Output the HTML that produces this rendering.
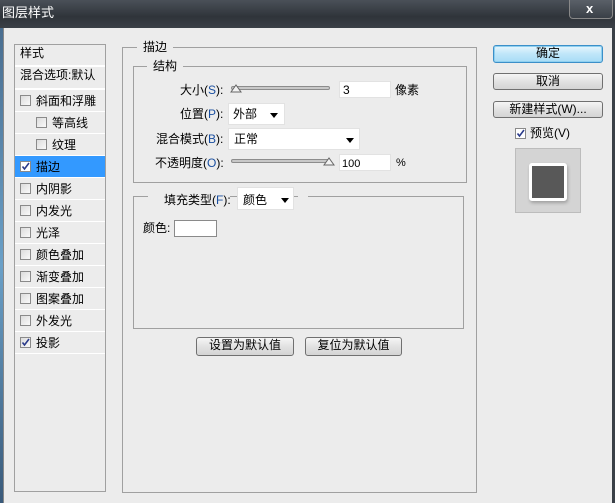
<!DOCTYPE html>
<html><head><meta charset="utf-8"><style>
*{margin:0;padding:0;box-sizing:border-box}
body{width:615px;height:503px;overflow:hidden;background:#ececec;font-family:"Liberation Sans","Noto Sans CJK SC",sans-serif;font-size:12px;color:#000;position:relative}
.a{position:absolute}
.t{position:absolute;white-space:nowrap;line-height:14px}
.title{left:0;top:0;width:615px;height:28px;background:linear-gradient(#4a5058,#2f343a 60%,#3a4047);}
.box{position:absolute;border:1px solid #a0a0a0}
.leg{position:absolute;background:#ececec;padding:0 6px;line-height:14px}
.inp{position:absolute;background:#fff;border:1px solid #e2e2e2}
.btn{position:absolute;border:1px solid #707070;border-radius:3px;background:linear-gradient(#f5f5f5,#e2e2e2 50%,#d4d4d4);text-align:center;line-height:15px}
.cb{position:absolute;width:11px;height:11px;border:1px solid #8a8a8a;background:linear-gradient(135deg,#dcdcdc,#fafafa)}
.cb svg{position:absolute;left:0;top:0}
.row{position:absolute;left:15px;width:90px;height:22px;border-bottom:1px solid #fff}
.row span{position:absolute;top:4px;line-height:14px}
.u{color:#1a4fa0}
.arr{position:absolute;width:0;height:0;border-left:4px solid transparent;border-right:4px solid transparent;border-top:5px solid #000}
.slider{position:absolute;height:4px;border:1px solid #8c8c8c;border-radius:2px;background:#c8c8c8}
</style></head><body>
<div class="a title"></div>
<div class="t" style="left:2px;top:6px;color:#fff;font-size:13px">图层样式</div>
<div class="a" style="left:569px;top:0;width:44px;height:19px;border:1px solid #888;border-top:none;border-radius:0 0 4px 4px;background:linear-gradient(#5a6068,#3a4047)"></div>
<div class="t" style="left:586px;top:2px;color:#fff;font-weight:bold;font-size:13px">x</div>
<div class="a" style="left:0;top:28px;width:3px;height:475px;background:linear-gradient(#4a6e90,#6aa0c8,#3a5a7a)"></div>
<div class="a" style="left:3px;top:28px;width:1px;height:475px;background:#888"></div>
<div class="a" style="left:612px;top:28px;width:3px;height:475px;background:#3a4047"></div>

<div class="box" style="left:14px;top:44px;width:92px;height:448px;background:#ececec"></div>
<div class="row" style="top:45px;height:22px;border-bottom:2px solid #fff"><span style="left:5px;top:1px">样式</span></div>
<div class="row" style="top:67px;height:23px;border-bottom:2px solid #fff"><span style="left:5px;top:1px">混合选项:默认</span></div>
<div class="row" style="top:90px"><div class="cb" style="left:5px;top:5px"></div><span style="left:21px">斜面和浮雕</span></div>
<div class="row" style="top:112px"><div class="cb" style="left:21px;top:5px"></div><span style="left:37px">等高线</span></div>
<div class="row" style="top:134px"><div class="cb" style="left:21px;top:5px"></div><span style="left:37px">纹理</span></div>
<div class="row" style="top:156px;background:#3399ff"><div class="cb" style="left:5px;top:5px;background:#fff"><svg width="9" height="9"><path d="M1.5 4.5 L3.5 7 L8 1" stroke="#2a3a8a" stroke-width="1.6" fill="none"/></svg></div><span style="left:21px">描边</span></div>
<div class="row" style="top:178px"><div class="cb" style="left:5px;top:5px"></div><span style="left:21px">内阴影</span></div>
<div class="row" style="top:200px"><div class="cb" style="left:5px;top:5px"></div><span style="left:21px">内发光</span></div>
<div class="row" style="top:222px"><div class="cb" style="left:5px;top:5px"></div><span style="left:21px">光泽</span></div>
<div class="row" style="top:244px"><div class="cb" style="left:5px;top:5px"></div><span style="left:21px">颜色叠加</span></div>
<div class="row" style="top:266px"><div class="cb" style="left:5px;top:5px"></div><span style="left:21px">渐变叠加</span></div>
<div class="row" style="top:288px"><div class="cb" style="left:5px;top:5px"></div><span style="left:21px">图案叠加</span></div>
<div class="row" style="top:310px"><div class="cb" style="left:5px;top:5px"></div><span style="left:21px">外发光</span></div>
<div class="row" style="top:332px"><div class="cb" style="left:5px;top:5px"><svg width="9" height="9"><path d="M1.5 4.5 L3.5 7 L8 1" stroke="#2a3a8a" stroke-width="1.6" fill="none"/></svg></div><span style="left:21px">投影</span></div>

<div class="box" style="left:122px;top:47px;width:355px;height:446px"></div>
<div class="leg" style="left:137px;top:40px">描边</div>
<div class="box" style="left:133px;top:66px;width:334px;height:117px"></div>
<div class="leg" style="left:147px;top:59px">结构</div>

<div class="t" style="left:180px;top:83px">大小(<span class="u">S</span>):</div>
<div class="slider" style="left:231px;top:86px;width:99px"></div>
<svg class="a" style="left:230px;top:83px" width="12" height="10"><polygon points="1,9 6,2 11,9" fill="#f2f2f2" stroke="#666"/></svg>
<div class="inp" style="left:339px;top:81px;width:52px;height:17px"></div>
<div class="t" style="left:343px;top:83px">3</div>
<div class="t" style="left:395px;top:83px">像素</div>

<div class="t" style="left:180px;top:107px">位置(<span class="u">P</span>):</div>
<div class="inp" style="left:228px;top:103px;width:57px;height:22px"></div>
<div class="t" style="left:233px;top:107px">外部</div>
<div class="arr" style="left:270px;top:113px"></div>

<div class="t" style="left:156px;top:132px">混合模式(<span class="u">B</span>):</div>
<div class="inp" style="left:228px;top:128px;width:132px;height:22px"></div>
<div class="t" style="left:234px;top:132px">正常</div>
<div class="arr" style="left:346px;top:138px"></div>

<div class="t" style="left:155px;top:156px">不透明度(<span class="u">O</span>):</div>
<div class="slider" style="left:231px;top:159px;width:99px"></div>
<svg class="a" style="left:323px;top:156px" width="12" height="10"><polygon points="1,9 6,2 11,9" fill="#f2f2f2" stroke="#666"/></svg>
<div class="inp" style="left:339px;top:154px;width:52px;height:17px"></div>
<div class="t" style="left:342px;top:157px;font-size:11px">100</div>
<div class="t" style="left:396px;top:156px;font-size:11px">%</div>

<div class="box" style="left:133px;top:196px;width:331px;height:133px"></div>
<div class="a" style="left:148px;top:190px;width:82px;height:14px;background:#ececec"></div>
<div class="a" style="left:298px;top:190px;width:10px;height:14px;background:#ececec"></div>
<div class="t" style="left:164px;top:193px">填充类型(<span class="u">F</span>):</div>
<div class="inp" style="left:237px;top:187px;width:57px;height:23px"></div>
<div class="t" style="left:243px;top:193px">颜色</div>
<div class="arr" style="left:281px;top:198px"></div>
<div class="t" style="left:143px;top:221px">颜色:</div>
<div class="a" style="left:174px;top:220px;width:43px;height:17px;background:#fff;border:1px solid #8a8a8a"></div>

<div class="btn" style="left:196px;top:337px;width:98px;height:19px">设置为默认值</div>
<div class="btn" style="left:305px;top:337px;width:97px;height:19px">复位为默认值</div>

<div class="btn" style="left:493px;top:45px;width:110px;height:18px;border-color:#3c8fc8;background:linear-gradient(#e8f6fd,#bfe6f9 50%,#a8dcf6);box-shadow:0 0 0 1px #8fd0f0 inset">确定</div>
<div class="btn" style="left:493px;top:73px;width:110px;height:17px">取消</div>
<div class="btn" style="left:493px;top:101px;width:110px;height:17px">新建样式(W)...</div>
<div class="cb" style="left:515px;top:128px;background:#fff"><svg width="9" height="9"><path d="M1.5 4.5 L3.5 7 L8 1" stroke="#2a3a8a" stroke-width="1.6" fill="none"/></svg></div>
<div class="t" style="left:530px;top:126px">预览(V)</div>
<div class="a" style="left:515px;top:148px;width:66px;height:65px;background:#d4d4d4;border:1px solid #bcbcbc"></div>
<div class="a" style="left:529px;top:163px;width:38px;height:38px;background:#585858;border:3px solid #fff;border-radius:3px;box-shadow:1px 2px 3px rgba(0,0,0,.25)"></div>
</body></html>
